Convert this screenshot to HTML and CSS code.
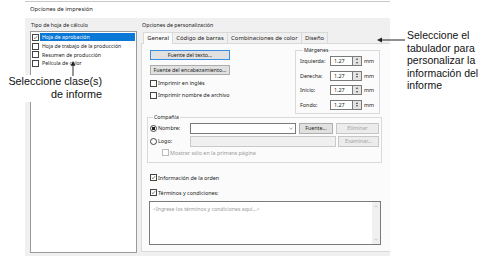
FILE: index.html
```html
<!DOCTYPE html>
<html lang="es">
<head>
<meta charset="UTF-8">
<title>Opciones de impresión</title>
<link rel="stylesheet" href="styles.css">
</head>
<body>
<div class="page">
  <div class="dialog">
    <div class="titlebar">Opciones de impresión</div>
    <div class="dlg-body">
      <div class="left-group">
        <div class="group-label">Tipo de hoja de cálculo</div>
        <div class="listbox">
          <div class="item"><span class="chk on"><svg viewBox="0 0 7 7"><polyline points="1.2,3.6 2.8,5.2 5.8,1.6"/></svg></span><span class="item-text sel">Hoja de aprobación</span></div>
          <div class="item"><span class="chk"></span><span class="item-text">Hoja de trabajo de la producción</span></div>
          <div class="item"><span class="chk"></span><span class="item-text">Resumen de producción</span></div>
          <div class="item"><span class="chk"></span><span class="item-text">Película de color</span></div>
        </div>
      </div>
      <div class="right-group">
        <div class="group-label">Opciones de personalización</div>
        <div class="tabs">
          <div class="tab active">General</div>
          <div class="tab">Código de barras</div>
          <div class="tab">Combinaciones de color</div>
          <div class="tab">Diseño</div>
        </div>
        <div class="panel">
          <div class="top-row">
            <div class="col-left">
              <div class="btn wide focus">Fuente del texto...</div>
              <div class="btn wide">Fuente del encabezamiento...</div>
              <div class="check first"><span class="chk"></span>Imprimir en inglés</div>
              <div class="check"><span class="chk"></span>Imprimir nombre de archivo</div>
            </div>
            <fieldset class="margins">
              <legend>Márgenes</legend>
              <div class="mrow"><span class="mlabel">Izquierda:</span><span class="num">1.27</span><span class="spin"><i class="up"></i><i class="down"></i></span><span class="unit">mm</span></div>
              <div class="mrow"><span class="mlabel">Derecha:</span><span class="num">1.27</span><span class="spin"><i class="up"></i><i class="down"></i></span><span class="unit">mm</span></div>
              <div class="mrow"><span class="mlabel">Inicio:</span><span class="num">1.27</span><span class="spin"><i class="up"></i><i class="down"></i></span><span class="unit">mm</span></div>
              <div class="mrow"><span class="mlabel">Fondo:</span><span class="num">1.27</span><span class="spin"><i class="up"></i><i class="down"></i></span><span class="unit">mm</span></div>
            </fieldset>
          </div>
          <fieldset class="company">
            <legend>Compañía</legend>
            <div class="crow">
              <span class="radio on"></span><span class="clabel">Nombre:</span>
              <span class="combo"><svg viewBox="0 0 6 4"><polyline points="0.5,0.8 3,3.2 5.5,0.8"/></svg></span>
              <span class="btn b-font">Fuente...</span>
              <span class="btn off b-del">Eliminar</span>
            </div>
            <div class="crow">
              <span class="radio"></span><span class="clabel">Logo:</span>
              <span class="field off"></span>
              <span class="btn off b-browse">Examinar...</span>
            </div>
            <div class="check sub disabled"><span class="chk"></span>Mostrar sólo en la primera página</div>
          </fieldset>
          <div class="check order"><span class="chk on"><svg viewBox="0 0 7 7"><polyline points="1.2,3.6 2.8,5.2 5.8,1.6"/></svg></span>Información de la orden</div>
          <div class="check terms"><span class="chk on"><svg viewBox="0 0 7 7"><polyline points="1.2,3.6 2.8,5.2 5.8,1.6"/></svg></span>Términos y condiciones:</div>
          <div class="memo">
            <span class="hint">&lt;Ingrese los términos y condiciones aquí...&gt;</span>
            <span class="vscroll"><svg viewBox="0 0 6 4"><polyline points="0.8,3.2 3,0.8 5.2,3.2"/></svg><svg viewBox="0 0 6 4"><polyline points="0.8,0.8 3,3.2 5.2,0.8"/></svg></span>
          </div>
        </div>
      </div>
    </div>
  </div>
  <div class="note-right">Seleccione el<br>tabulador para<br>personalizar la<br>información del<br>informe</div>

  <div class="note-left">Seleccione clase(s)<br>de informe</div>
  <svg class="arrow-up" viewBox="0 0 6 16"><polygon points="3,0 5.5,5 0.5,5"/><line x1="3" y1="4" x2="3" y2="16"/></svg>
  <svg class="arrow-left" viewBox="0 0 28 6"><polygon points="0,3 5,0.5 5,5.5"/><line x1="4" y1="3" x2="28" y2="3"/></svg>
</div>
</body>
</html>
```

FILE: styles.css
```css
body { margin: 0; background: #fff; }
.page { position: relative; display: flex; width: 485px; height: 258px; overflow: hidden; font-family: "Noto Sans", "Open Sans", sans-serif; font-size: 5.4px; color: #222; }

.dialog { flex: none; width: 365px; height: 256px; margin-left: 25px; display: flex; flex-direction: column; overflow: hidden; }
.titlebar { height: 16px; line-height: 15px; margin-top: 1px; padding-left: 5px; border-top: 1px solid #c9c9c9; background: #fff; font-size: 5.8px; }
.dlg-body { flex: 1; display: flex; background: #f0f0f0; padding: 2px 0 3px 5px; }

.group-label { height: 11px; line-height: 11px; padding-left: 1px; font-size: 5.3px; }
.left-group { flex: none; width: 107px; display: flex; flex-direction: column; }
.listbox { flex: 1; background: #fff; border: 1px solid #9a9a9a; padding: 1px 1px; }
.item { display: flex; align-items: center; height: 8.7px; }
.item-text { line-height: 8px; padding: 0 2px; font-size: 5.2px; }
.item-text.sel { flex: 1; background: #0a78d7; color: #fff; }

.chk { flex: none; display: inline-block; box-sizing: border-box; width: 7px; height: 7px; margin-right: 1px; border: 1px solid #444; background: #fff; }
.chk svg { display: block; width: 5px; height: 5px; }
.chk polyline { fill: none; stroke: #333; stroke-width: 0.9; }
.radio { flex: none; display: inline-block; box-sizing: border-box; width: 7px; height: 7px; border: 1px solid #444; border-radius: 50%; background: #fff; }
.radio.on { background: radial-gradient(circle, #222 0 1.6px, #fff 1.9px); }

.right-group { flex: none; width: 250px; margin-left: 4px; display: flex; flex-direction: column; margin-bottom: 1px; }
.tabs { display: flex; height: 12px; padding-left: 2px; align-items: flex-end; }
.tab { height: 10px; line-height: 10px; padding: 0 3.2px; border: 1px solid #d9d9d9; border-bottom: none; margin-left: -1px; background: #f0f0f0; font-size: 5.9px; }
.tab.active { height: 11px; line-height: 11px; background: #fbfbfb; margin-left: 0; position: relative; z-index: 1; margin-bottom: -1px; }
.panel { flex: 1; background: #fbfbfb; border: 1px solid #d9d9d9; padding: 6px 0 0 8px; }

.top-row { display: flex; }
.col-left { flex: none; width: 145px; }
.btn { display: flex; align-items: center; justify-content: center; box-sizing: border-box; height: 10px; border: 1px solid #adadad; background: #e1e1e1; font-size: 5.3px; }
.btn.wide { width: 80px; margin-bottom: 5px; }
.btn.focus { border-color: #3a8ee0; }
.btn.off { color: #a3a3a3; border-color: #c6c6c6; background: #ececec; }
.check { display: flex; align-items: center; height: 8px; margin-top: 4px; }
.check.first { margin-top: -1px; }

fieldset { margin: 0; padding: 0; border: 1px solid #dadada; }
legend { padding: 0 1px; margin-left: 3px; line-height: 7px; font-size: 5.2px; }
.margins { width: 85px; box-sizing: border-box; margin-top: -3px; padding: 0 3px 3px 4px; }
.mrow { display: flex; align-items: center; height: 10px; margin-top: 4.5px; }
.mrow:first-of-type { margin-top: 2px; }
.mlabel { width: 30px; }
.num { box-sizing: border-box; width: 22px; height: 10px; line-height: 8px; padding-left: 3px; border: 1px solid #7a7a7a; border-right: none; background: #fff; }
.spin { display: flex; flex-direction: column; justify-content: center; align-items: center; gap: 1.5px; box-sizing: border-box; width: 10px; height: 10px; border: 1px solid #7a7a7a; background: #e3e3e3; }
.spin i { width: 0; height: 0; border-left: 1.8px solid transparent; border-right: 1.8px solid transparent; }
.spin .up { border-bottom: 2px solid #444; }
.spin .down { border-top: 2px solid #444; }
.unit { margin-left: 2px; }

.company { width: 233px; box-sizing: border-box; margin-left: -3px; padding: 2px 2px 5px 2px; }
.crow { display: flex; align-items: center; height: 11px; margin-bottom: 2px; }
.clabel { width: 32px; padding-left: 1px; }
.combo { display: flex; align-items: center; justify-content: flex-end; box-sizing: border-box; width: 106px; height: 11px; padding-right: 2px; border: 1px solid #7a7a7a; background: #fff; }
.combo svg { width: 4px; height: 3px; }
.combo polyline, .vscroll polyline { fill: none; stroke: #555; stroke-width: 0.8; }
.crow .btn { height: 11px; }
.b-font { width: 34px; margin-left: 3px; }
.b-del { width: 43px; margin-left: 3px; }
.field { box-sizing: border-box; width: 146px; height: 11px; border: 1px solid #c9c9c9; background: #f0f0f0; }
.b-browse { width: 41px; margin-left: 2px; }
.check.sub { margin-top: 2px; padding-left: 12px; }
.disabled { color: #9a9a9a; }
.disabled .chk { border-color: #bcbcbc; }

.check.order { margin-top: 11px; }
.check.terms { margin-top: 7px; }
.memo { display: flex; justify-content: space-between; box-sizing: border-box; width: 232px; height: 44px; margin: 4px 0 0 -1px; border: 1px solid #7a7a7a; background: #fff; }
.hint { padding: 3px 0 0 3px; color: #9a9a9a; font-size: 5.2px; }
.vscroll { display: flex; flex-direction: column; justify-content: space-between; align-items: center; width: 8px; padding: 3px 0; background: #f0f0f0; }
.vscroll svg { width: 4px; height: 3px; }
.vscroll polyline { stroke: #a8a8a8; }

.note-right { margin: 29px 0 0 17px; font-family: "Liberation Sans", Arial, sans-serif; font-size: 10.5px; line-height: 12.5px; color: #111; }
.note-left { position: absolute; left: 0; top: 75px; width: 97px; padding: 0 0 2px 5px; background: #fff; text-align: right; font-family: "Liberation Sans", Arial, sans-serif; font-size: 10.8px; line-height: 12.5px; color: #111; }
.arrow-up { position: absolute; left: 70px; top: 61px; width: 6px; height: 15px; }
.arrow-left { position: absolute; left: 377px; top: 37px; width: 28px; height: 6px; }
.arrow-up polygon, .arrow-left polygon { fill: #222; }
.arrow-up line, .arrow-left line { stroke: #222; stroke-width: 1; }
```
